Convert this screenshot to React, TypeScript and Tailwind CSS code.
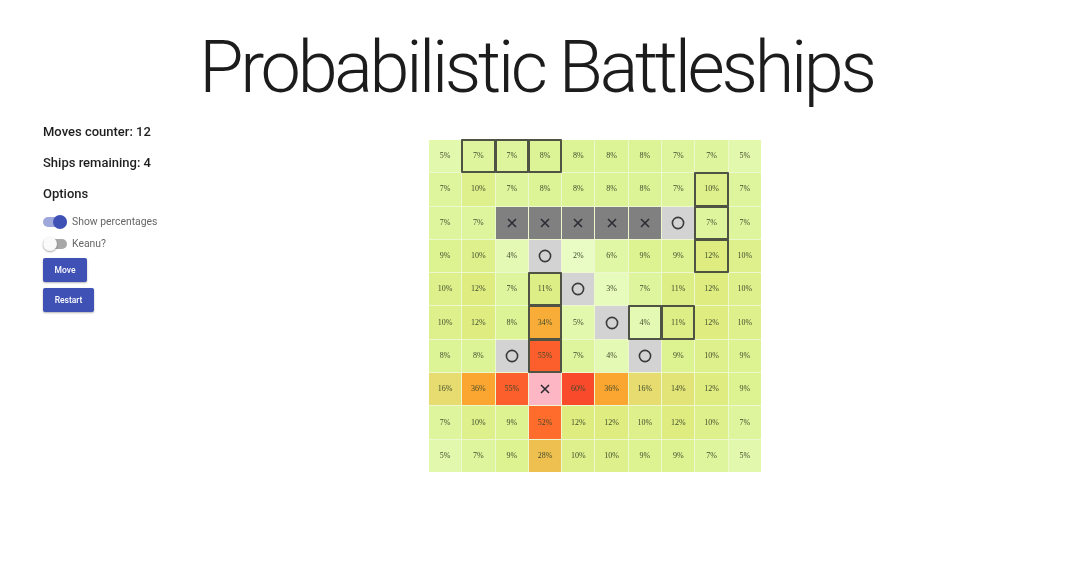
import React from 'react'

type Cell = number | 'hit' | 'miss' | 'sunk'

const S: Cell = 'sunk'
const O: Cell = 'miss'
const H: Cell = 'hit'

const board: Cell[][] = [
  [5, 7, 7, 8, 8, 8, 8, 7, 7, 5],
  [7, 10, 7, 8, 8, 8, 8, 7, 10, 7],
  [7, 7, S, S, S, S, S, O, 7, 7],
  [9, 10, 4, O, 2, 6, 9, 9, 12, 10],
  [10, 12, 7, 11, O, 3, 7, 11, 12, 10],
  [10, 12, 8, 34, 5, O, 4, 11, 12, 10],
  [8, 8, O, 55, 7, 4, O, 9, 10, 9],
  [16, 36, 55, H, 60, 36, 16, 14, 12, 9],
  [7, 10, 9, 52, 12, 12, 10, 12, 10, 7],
  [5, 7, 9, 28, 10, 10, 9, 9, 7, 5],
]

const outlined = new Set(['0-1', '0-2', '0-3', '1-8', '2-8', '3-8', '4-3', '5-3', '6-3', '5-6', '5-7'])

// percent -> colour stops, read off the heat map
const stops: [number, number[]][] = [
  [2, [232, 252, 196]],
  [5, [226, 248, 172]],
  [8, [220, 244, 150]],
  [12, [222, 236, 128]],
  [16, [230, 220, 112]],
  [28, [238, 192, 80]],
  [36, [250, 166, 48]],
  [52, [255, 108, 44]],
  [60, [250, 74, 44]],
]

function heat(p: number) {
  for (let i = 1; i < stops.length; i++) {
    const [a, ca] = stops[i - 1]
    const [b, cb] = stops[i]
    if (p <= b) {
      const t = (p - a) / (b - a)
      const c = ca.map((v, k) => Math.round(v + (cb[k] - v) * t))
      return `rgb(${c[0]},${c[1]},${c[2]})`
    }
  }
  return 'rgb(250,74,44)'
}

function Cross() {
  return (
    <svg width="10" height="10" viewBox="0 0 10 10" fill="none" stroke="#2c2c34" strokeWidth="1.6">
      <path d="M1 1 L9 9 M9 1 L1 9" />
    </svg>
  )
}

function Ring() {
  return (
    <svg width="14" height="14" viewBox="0 0 14 14" fill="none" stroke="#3a3a3a" strokeWidth="1.6">
      <circle cx="7" cy="7" r="5.6" />
    </svg>
  )
}

function BoardCell({ cell, active }: { cell: Cell; active: boolean }) {
  const base = 'flex items-center justify-center box-border h-full w-full'
  const ring = active ? 'relative z-10 -m-px h-[calc(100%+2px)] w-[calc(100%+2px)] border-2 border-[#4f5344] rounded-[1px]' : 'h-full w-full'

  if (cell === 'sunk') return <div className={`${base} bg-[#808080]`}><Cross /></div>
  if (cell === 'hit') return <div className={`${base} bg-[#fdb6c4]`}><Cross /></div>
  if (cell === 'miss') return <div className={`${base} bg-[#d3d3d3]`}><Ring /></div>

  return (
    <div className={`flex items-center justify-center box-border ${ring}`} style={{ backgroundColor: heat(cell) }}>
      <span className="font-['Liberation_Serif',serif] text-[8px] leading-none text-[#3f4a2c]">{cell}%</span>
    </div>
  )
}

function Toggle({ on, label }: { on: boolean; label: string }) {
  return (
    <div className="flex h-[22px] items-center gap-[5px]">
      <div className="relative h-[10px] w-[24px]">
        <div className={`h-full w-full rounded-full ${on ? 'bg-[#9fa8da]' : 'bg-[#a8a8a8]'}`} />
        <div
          className={`absolute top-[-2px] h-[14px] w-[14px] rounded-full ${
            on ? 'right-0 bg-[#3f51b5]' : 'left-0 bg-[#fafafa] shadow-[0_1px_2px_rgba(0,0,0,0.35)]'
          }`}
        />
      </div>
      <span className="text-[10.4px] text-[#666666]">{label}</span>
    </div>
  )
}

function ActionButton({ label, width }: { label: string; width: string }) {
  return (
    <button
      type="button"
      className={`${width} flex h-[24px] items-center justify-center rounded-[2px] bg-[#3f51b5] text-[8.5px] font-medium text-white shadow-[0_1px_2px_rgba(0,0,0,0.3)]`}
    >
      {label}
    </button>
  )
}

export default function App() {
  return (
    <div className="h-[581px] w-[1081px] overflow-hidden bg-white font-['Roboto',sans-serif] text-[#1e1e1e] blur-[0.4px]">
      <h1 className="pr-[8px] pt-[26px] text-center text-[72px] font-light leading-[84px] tracking-[-3.3px] text-[#1c1c1c]">
        Probabilistic Battleships
      </h1>

      <div className="mt-[14px] flex">
        <aside className="w-[429px] pl-[43px]">
          <p className="text-[13px] font-medium leading-[15px]">Moves counter: 12</p>
          <p className="mt-[16px] text-[13px] font-medium leading-[15px]">Ships remaining: 4</p>
          <p className="mt-[16px] text-[13px] font-medium leading-[15px]">Options</p>
          <div className="mt-[10px]">
            <Toggle on label="Show percentages" />
            <Toggle on={false} label="Keanu?" />
          </div>
          <div className="mt-[3px] flex flex-col gap-[6px]">
            <ActionButton label="Move" width="w-[44px]" />
            <ActionButton label="Restart" width="w-[51px]" />
          </div>
        </aside>

        <div className="mt-[16px] grid h-[332px] w-[332px] grid-cols-10 grid-rows-10 gap-px bg-[#eef8cf]">
          {board.map((row, r) =>
            row.map((cell, c) => (
              <BoardCell key={`${r}-${c}`} cell={cell} active={outlined.has(`${r}-${c}`)} />
            ))
          )}
        </div>
      </div>
    </div>
  )
}
